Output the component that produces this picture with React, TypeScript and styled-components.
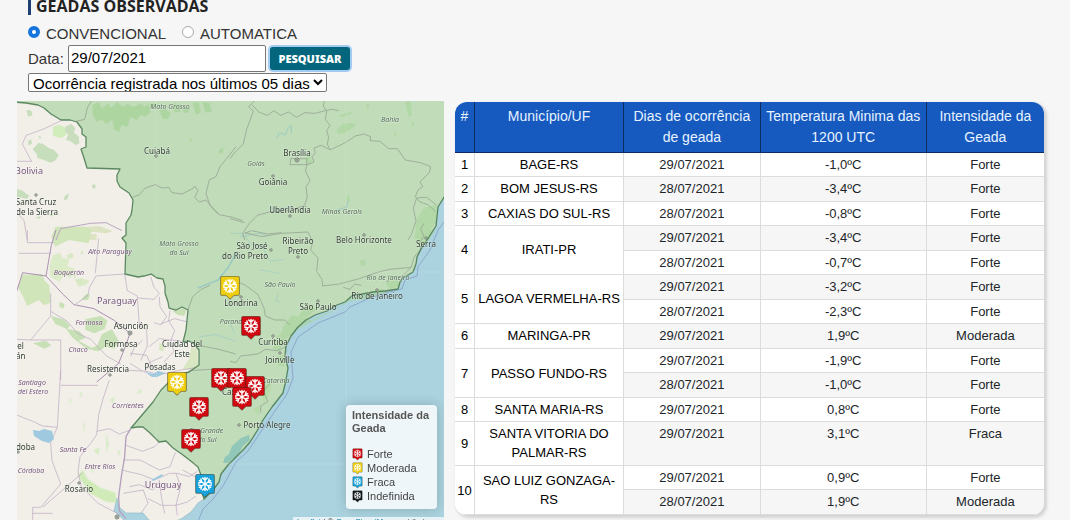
import React from "react";
import styled, { createGlobalStyle } from "styled-components";

const GlobalStyle = createGlobalStyle`
  *, *::before, *::after { box-sizing: border-box; }
  html { background: #f6f6f6; overflow: hidden; }
  body {
    margin: 0;
    color: #333;
    font-family: "Liberation Sans", Arial, sans-serif;
    font-size: 15px;
  }
`;

const Page = styled.main`
  padding: 0 26px 0 17px;
`;

const Filters = styled.form`
  padding: 0 0 9px 11px;
`;

const Heading = styled.h1`
  margin: 0 0 8px;
  padding-left: 5px;
  border-left: 3px solid #1c3f74;
  color: #222;
  font-family: "Open Sans", "Noto Sans", sans-serif;
  font-size: 16px;
  font-weight: 700;
  line-height: 13px;
  height: 15px;
  white-space: nowrap;
`;

const RadioRow = styled.div`
  display: flex;
  gap: 16px;
  height: 21px;
`;

const RadioLabel = styled.label`
  display: flex;
  align-items: center;
  gap: 6px;
`;

const Radio = styled.input`
  appearance: none;
  width: 12px;
  height: 12px;
  margin: 0 0 3px;
  border: 1px solid #aaa;
  border-radius: 50%;
  background: #fff;
  &:checked { border: 4px solid #1475dc; }
`;

const DateRow = styled.div`
  display: flex;
  align-items: center;
  height: 28px;
`;

const DateLabel = styled.label`
  width: 40px;
`;

const DateInput = styled.input`
  width: 198px;
  height: 27px;
  padding: 0 2px 2px;
  border: 1px solid #767676;
  border-radius: 2px;
  background: #fff;
  color: #000;
  font: inherit;
`;

const SearchButton = styled.button`
  margin-left: 4px;
  width: 80px;
  height: 23px;
  padding: 0;
  border: 0;
  border-radius: 3px;
  background: #03667c;
  box-shadow: 0 0 0 2px #a3cbf2;
  color: #fff;
  font-family: "Noto Sans", "Open Sans", sans-serif;
  font-size: 11px;
  font-weight: 900;
`;

const PeriodSelect = styled.select`
  display: block;
  width: 299px;
  height: 19px;
  margin-top: 1px;
  padding: 0;
  border: 1px solid #767676;
  border-radius: 2px;
  background: #fff;
  color: #000;
  font: inherit;
`;

const Content = styled.div`
  display: grid;
  grid-template-columns: minmax(0, 427fr) minmax(0, 589fr);
  gap: 11px;
  align-items: start;
`;

const MapPanel = styled.section`
  position: relative;
  height: 432px;
  overflow: hidden;
  background: #aad3df;
`;

const MapSvg = styled.svg`
  display: block;
  width: 100%;
  height: 100%;
  font-family: "Noto Sans", sans-serif;
`;

const PlaceText = styled.text<{ $kind: Kind }>`
  text-anchor: middle;
  paint-order: stroke;
  stroke: rgba(255, 255, 255, 0.4);
  stroke-width: 1px;
  font-size: ${(p) => (p.$kind === "country" ? 9 : p.$kind === "city" ? 8 : 7)}px;
  font-style: ${(p) => (p.$kind === "state" || p.$kind === "province" ? "italic" : "normal")};
  fill: ${(p) =>
    p.$kind === "city" ? "#2f3b30" : p.$kind === "state" ? "#566e59" : "#75557b"};
`;

const Legend = styled.aside`
  position: absolute;
  right: 7px;
  bottom: 24px;
  width: 91px;
  padding: 4px 4px 6px 6px;
  border-radius: 4px;
  background: rgba(255, 255, 255, 0.8);
  box-shadow: 0 0 12px rgba(0, 0, 0, 0.2);
  color: #555;
  font-size: 11px;
`;

const LegendTitle = styled.h2`
  margin: 0 0 12px;
  font-size: 11px;
  font-weight: 700;
  line-height: 13px;
`;

const LegendItem = styled.div`
  display: flex;
  align-items: center;
  gap: 4px;
  height: 14px;
  color: #444;
`;

const Attribution = styled.footer`
  position: absolute;
  right: 0;
  bottom: 0;
  width: 151px;
  height: 16px;
  padding-left: 4px;
  background: rgba(255, 255, 255, 0.7);
  color: #333;
  font-size: 8px;
  line-height: 9px;
  white-space: nowrap;
  a { color: #0078a8; text-decoration: none; }
`;

const TableFrame = styled.div`
  margin-top: 1px;
  overflow: hidden;
  border-radius: 12px;
  background: #fff;
  box-shadow: 2px 2px 3px 1px #d4d4d4;
`;

const DataTable = styled.table`
  width: 100%;
  table-layout: fixed;
  border-collapse: separate;
  border-spacing: 0;
  color: #212529;
  font-size: 13px;
  line-height: 19px;
  text-align: center;
`;

const Col = styled.col<{ $share: number }>`
  width: ${(p) => p.$share}%;
`;

const HeadCell = styled.th`
  padding: 4px 2px;
  border-right: 1px solid #0d2c60;
  border-bottom: 1px solid #0d2c60;
  background: #165abf;
  color: #e8f3ff;
  font-size: 14px;
  font-weight: 400;
  line-height: 21px;
  vertical-align: top;
  &:last-child { border-right: 0; }
`;

const Cell = styled.td`
  padding: 2px;
  border-right: 1px solid #dcdcdc;
  border-bottom: 1px solid #dcdcdc;
  vertical-align: top;
  &:last-child { border-right: 0; }
`;

const GroupCell = styled(Cell)`
  background: #fff;
  color: #000;
  vertical-align: middle;
`;

const Row = styled.tr`
  &:nth-child(even) { background: #f6f6f6; }
  &:nth-child(even) > td { padding-bottom: 3px; }
`;

type Kind = "city" | "state" | "province" | "country";

type Reading = [day: string, temperature: string, intensity: string];

const STATIONS: { name: string; readings: Reading[] }[] = [
  { name: "BAGE-RS", readings: [["29/07/2021", "-1,0ºC", "Forte"]] },
  { name: "BOM JESUS-RS", readings: [["28/07/2021", "-3,4ºC", "Forte"]] },
  { name: "CAXIAS DO SUL-RS", readings: [["28/07/2021", "-0,8ºC", "Forte"]] },
  { name: "IRATI-PR", readings: [["29/07/2021", "-3,4ºC", "Forte"], ["28/07/2021", "-0,7ºC", "Forte"]] },
  { name: "LAGOA VERMELHA-RS", readings: [["29/07/2021", "-3,2ºC", "Forte"], ["28/07/2021", "-2,3ºC", "Forte"]] },
  { name: "MARINGA-PR", readings: [["29/07/2021", "1,9ºC", "Moderada"]] },
  { name: "PASSO FUNDO-RS", readings: [["29/07/2021", "-1,9ºC", "Forte"], ["28/07/2021", "-1,0ºC", "Forte"]] },
  { name: "SANTA MARIA-RS", readings: [["29/07/2021", "0,8ºC", "Forte"]] },
  { name: "SANTA VITORIA DO PALMAR-RS", readings: [["29/07/2021", "3,1ºC", "Fraca"]] },
  { name: "SAO LUIZ GONZAGA-RS", readings: [["29/07/2021", "0,9ºC", "Forte"], ["28/07/2021", "1,9ºC", "Moderada"]] },
];

const LABELS: [text: string, x: number, y: number, kind: Kind][] = [
  ["Mato Grosso", 170, 109, "state"],
  ["Bahia", 390, 122, "state"],
  ["Goiás", 256, 166, "state"],
  ["Minas Gerais", 342, 214, "state"],
  ["Mato Grosso", 179, 246, "state"],
  ["do Sul", 179, 255, "state"],
  ["São Paulo", 280, 287, "state"],
  ["Rio de Janeiro", 388, 280, "state"],
  ["Paraná", 231, 324, "state"],
  ["Catarina", 276, 383, "state"],
  ["Rio Grande", 206, 433, "state"],
  ["do Sul", 207, 442, "state"],
  ["Alto Paraguay", 110, 254, "province"],
  ["Boquerón", 69, 275, "province"],
  ["Formosa", 89, 325, "province"],
  ["Chaco", 78, 352, "province"],
  ["Corrientes", 128, 408, "province"],
  ["Santiago", 32, 385, "province"],
  ["del Estero", 33, 394, "province"],
  ["Santa Fe", 73, 452, "province"],
  ["Entre Ríos", 100, 469, "province"],
  ["Córdoba", 31, 473, "province"],
  ["Bolivia", 29, 174, "country"],
  ["Paraguay", 117, 304, "country"],
  ["Uruguay", 163, 488, "country"],
  ["Cuiabá", 157, 154, "city"],
  ["Brasília", 297, 156, "city"],
  ["Goiânia", 273, 185, "city"],
  ["Uberlândia", 290, 213, "city"],
  ["São José", 252, 249, "city"],
  ["do Rio Preto", 245, 259, "city"],
  ["Ribeirão", 298, 244, "city"],
  ["Preto", 298, 254, "city"],
  ["Belo Horizonte", 364, 243, "city"],
  ["Serra", 426, 247, "city"],
  ["Rio de Janeiro", 377, 299, "city"],
  ["São Paulo", 318, 310, "city"],
  ["Londrina", 241, 306, "city"],
  ["Curitiba", 273, 345, "city"],
  ["Joinville", 280, 363, "city"],
  ["Caxias", 234, 395, "city"],
  ["Porto Alegre", 267, 428, "city"],
  ["Santa Cruz", 36, 205, "city"],
  ["de la Sierra", 37, 215, "city"],
  ["Asunción", 131, 329, "city"],
  ["Formosa", 121, 347, "city"],
  ["Ciudad del", 182, 347, "city"],
  ["Este", 182, 357, "city"],
  ["Posadas", 160, 370, "city"],
  ["Resistencia", 108, 372, "city"],
  ["Miguel", 11, 349, "city"],
  ["Tucumán", 8, 359, "city"],
  ["Córdoba", 19, 450, "city"],
  ["Rosario", 79, 492, "city"],
];

const CITY_DOTS = [
  [156, 156], [273, 176], [290, 216], [271, 250], [298, 257], [364, 235],
  [426, 238], [377, 290], [318, 301], [241, 297], [273, 336], [280, 353],
  [239, 425], [36, 195], [122, 350], [110, 375], [18, 452], [79, 483],
];

const CAPITAL_DOTS = [[297, 160], [130, 333], [117, 517]];

const COLORS = { forte: "#d10a12", moderada: "#efce10", fraca: "#17a2db", indefinida: "#10171c" };

const PINS: [x: number, y: number, color: string][] = [
  [230, 286, COLORS.moderada],
  [251, 326, COLORS.forte],
  [177, 382, COLORS.moderada],
  [221, 378, COLORS.forte],
  [237, 378, COLORS.forte],
  [255, 386, COLORS.forte],
  [242, 397, COLORS.forte],
  [199, 407, COLORS.forte],
  [191, 439, COLORS.forte],
  [205, 484, COLORS.fraca],
];

const LEGEND = [
  ["Forte", COLORS.forte],
  ["Moderada", COLORS.moderada],
  ["Fraca", COLORS.fraca],
  ["Indefinida", COLORS.indefinida],
];

const COAST =
  "L213 490 L219 482 L221 474 L228 465 L236 457 L244 449 L250 442 L257 431 L263 420 L272 407 L283 393 L286 380 L288 368 L285 356 L286 346 L291 336 L298 327 L306 320 L315 315 L327 311 L337 305 L345 302 L353 295 L362 294 L373 292 L385 291 L398 289 L400 282 L403 278 L413 272 L416 264 L417 257 L421 249 L427 240 L436 226 L438 207 L446 194";

const BRAZIL =
  "M14 102 L26 103 L38 105 L44 108 L51 114 L61 120 L70 120 L77 122 L82 129 L82 134 L86 137 L86 147 L81 149 L84 158 L87 168 L120 169 L117 175 L117 181 L120 187 L129 193 L133 200 L132 210 L131 215 L126 223 L126 235 L122 238 L126 243 L125 274 L138 277 L144 276 L151 274 L157 278 L163 279 L165 286 L165 293 L168 302 L169 308 L176 310 L182 307 L188 310 L187 320 L186 330 L183 342 L189 341 L194 344 L199 350 L199 365 L189 372 L178 375 L168 383 L161 390 L153 402 L142 415 L131 428 L137 427 L143 427 L150 433 L159 442 L166 441 L173 448 L183 455 L192 462 L198 467 L202 478 L200 485 L204 499 " +
  COAST;

const LAND =
  "M10 90 H446 V194 " +
  "L438 207 L436 226 L427 240 L417 257 L413 272 L403 278 L398 289 L373 292 L353 295 L337 305 L315 315 L298 327 L286 346 L288 368 L283 393 L272 407 L263 420 L250 442 L236 457 L221 474 L213 490 L204 499 L198 503 L191 512 L181 519 L160 527 L149 520 L143 513 L126 513 L119 507 L117 498 L114 511 L123 519 L130 540 H10 Z";

function Snowflake() {
  return (
    <g fill="none" stroke="#fff" strokeWidth="1.4" strokeLinecap="round">
      {[0, 60, 120, 180, 240, 300].map((angle) => (
        <path key={angle} d="M0 0V-6.6M-2.3 -6L0 -3.8L2.3 -6" transform={`rotate(${angle})`} />
      ))}
    </g>
  );
}

function Pin({ x, y, color }: { x: number; y: number; color: string }) {
  return (
    <g transform={`translate(${x} ${y})`}>
      <path d="M-8 -10H8Q10 -10 10 -8V8Q10 10 8 10H4L0 14L-4 10H-8Q-10 10-10 8V-8Q-10-10-8-10Z" fill="#453414" opacity=".4" />
      <path d="M-8 -9.5H8Q9.3 -9.5 9.3 -8V8Q9.3 9.2 8 9.2H4L0 13L-4 9.2H-8Q-9.3 9.2-9.3 8V-8Q-9.3-9.5-8-9.5Z" fill={color} stroke="#000" strokeOpacity=".2" />
      <Snowflake />
    </g>
  );
}

function BrazilMap() {
  return (
    <MapSvg viewBox="17 101 427 432" preserveAspectRatio="xMidYMid slice" role="img" aria-label="Mapa de geadas">
      <path d={LAND} fill="#f2efe9" stroke="#8fb4c4" strokeWidth=".6" />

      {/* vegetation outside Brazil */}
      <g fill="#b9dba3" opacity=".75">
        <g transform="translate(16 100) scale(.3333)">
          <path d="M110 82l18-8 20 8 2 24-14 8-24-6z" fill="#c5ecab" />
          <path d="M150 78l16-6 12 12-4 14 14 10 2 22-10 6-16-12-14-4 6-16-10-10z" fill="#bcd9b0" />
          <path d="M32 30l14 2 4 14-14 4zM36 122l10-4 2 14-10 4zM50 148l18-20 14 4 12 10 20 8 14 14-8 16-16 8-20-8-20-6-2-12zM66 108l10 2-4 8zM230 252l10 4-4 12-8-6zM0 266l20 6 20 16-6 8-34-6zM146 288l14-8-6 18-10 2zM98 344l16-6-6 12zM60 352l16-4-8 10z" fill="#b9d9ae" />
          <path d="M142 402h100v18h-104zM140 386l110-8 40 16-20 6-60-6z" fill="#d4dfb6" />
        </g>
        <g transform="translate(16 230) scale(.3333)">
          <path d="M6 172l14-38 58-2 8 20 14 14 4 52-20 8-16-16-34 18-10-22zM106 20l12-30 90 0 20 10-10 40-60-10-40 20z" fill="#c6e2ab" />
          <path d="M100 110l10-34 22-8 8 16 20 4-6 20 24 10-14 26-20-8-14 20-26-16zM150 76l18-6 6 12-16 6zM176 148l20-4 24 8-10 14-24 4z" fill="#d3e9bb" />
          <path d="M130 216l16 6-4 14-12-6zM104 258l38 10 20 18-8 12-36-16zM150 296l40 8 18 20-20 8 40 22 16-8 14-34 30-14 20 34-12 24-28-6-20 14-36-8-44-34zM208 268l46-10 20 14-8 24-30 14-28-10zM50 340l40-8 16 14-20 10zM196 210l20 0 6-16-12-2zM470 244l30-10 12 8-8 16-20-4z" />
          <path d="M170 130l12 6-8 10zM184 150l16 4-6 12zM160 68l12 4-4 12zM196 60l8 8-10 8zM430 340l14 4-2 20-12-4zM526 350l18 6 2 54-16 10-30-4 20-30z" fill="#cfe3b4" />
        </g>
        <g transform="translate(16 370) scale(.3333)">
          <path d="M186 316l14-16 14 26 40 28 44 14 4 30-30-2-50-26z" fill="#c4eaa6" />
          <path d="M200 150l8 20-4 20zM160 80l6 10-4 14zM280 90l16-10-4 20zM360 70l14-14 4 12zM270 190l10 30-10 30zM232 240l20-8-6 24zM228 280l6 20-8 10zM190 66l10 4-6 14zM304 240l10 6-6 14z" fill="#cfebbd" />
        </g>
      </g>

      {/* provincial borders of the neighbouring countries */}
      <g fill="none" stroke="#b9a6bf" strokeWidth="2">
        <g transform="translate(16 100) scale(.3333)">
          <path d="M135 62l-50 24-54 20-12 26 14 26 14 26H0M0 334l24 28 10 58" />
          <path d="M120 420l14-34 90-16 46-2 48 24" strokeWidth="3" />
        </g>
        <g transform="translate(16 230) scale(.3333)">
          <path d="M120 0l-14 46-16 92-70-10L0 190M90 138l50 54 34 32 60 12 62 36 46 38" strokeWidth="3" stroke="#aa91b2" />
          <path d="M342 310l-14 40-20 50-30 26-36 30" strokeWidth="3" stroke="#aa91b2" />
          <path d="M8 70h98M34 0v38h80M104 190v68l-60 72-44-2M44 330h90v120M104 244l50 30 30 36 40 18 48 50 42 24M238 130l10-104M180 222l36-26 4-22 20-36 86-6 8 50 30 16 6 90 22 10 2 50-20 44M364 204l50 4 16-18-16-18-10-32M430 200l2 30 20 30-18 24-20-6M434 282l42-16 38 10M400 350l30-24 66 8M342 370l50 6 18 40M342 400l38 24M330 420l60 4 40 10 66-14 60-10M462 242l-4 30 18 30-12 32 10 30-30 32M380 330l-26 24-10 26M440 380l-40 18-14 30" />
        </g>
        <g transform="translate(16 370) scale(.3333)">
          <path d="M0 134l50 20 30 14 44 4 10-170M134 46h112M124 172l-20 46 4 54 26 70-60 70H50v38M50 430h60M280 30l-20 60-12 44-6 60-18 26-32 40-6 46 10 44 50 50 70 36M242 184l38-8 30 16 34-12M80 412l120-104" />
          <path d="M344 176l-14 24-4 60-10 60-8 60 2 42 20 24" strokeWidth="4" stroke="#b3a0bd" />
          <path d="M330 226l50 18 36-14 18-18M322 270l50 0 58 30 32-10 16-42M316 300l60 14 40 16 44-20 24 0 36 10 24-16M340 350l30-6 40 16 20-24M322 370l60-10 14 40-20 28M396 386l40 20 44 0 34-10 26-18M430 330l6 50 10 50M480 310l14 40-14 56 4 30M500 300l36 20" />
        </g>
      </g>

      <path d={`${BRAZIL} V90 H14 Z`} fill="#c1dcb9" />

      {/* vegetation inside Brazil */}
      <g fill="#a0d090" opacity=".6">
        <g transform="translate(16 100) scale(.3333)">
          <path d="M230 14l18-8 10 20 18-16 8 14 20-18 16 16 14-10 20 8 24-10 6 12 12-10 8 24-16 14-14-6-12 16-18-10-10 30-18-6-8 22-14-8-4-30-18 14-16-14-14 8-12-22zM400 10h20l-4 12-14 2zM430 30l20-2 14 12-8 18-16-2zM470 10l20 4 4 20-18 4zM500 20l20 4-2 14-16 0zM530 10l18-4 6 30-14 8zM560 6l20 4 8 24-20 4zM610 150l12-8-2 16-12 4zM520 116l10 2-6 10z" />
        </g>
        <g transform="translate(230 100) scale(.3333)">
          <path d="M318 92l20-20 30-4 10 8-30 22-22 4zM328 46l34-10 6 4-34 12zM526 6l16-2 4 40-10 8zM408 14l10-4-4 20zM544 62l10 6-6 14zM228 170l12-4 6 20-14 10zM350 290l8-8 2 20-8 2zM490 100l10-2-2 14zM584 322l38-6-4 50-34 50-30 0 6-60z" fill="#a9d69b" />
        </g>
        <g transform="translate(230 230) scale(.3333)">
          <path d="M160 290l26-34 20 4 14-26 30-8 8 14-30 24 16 6 48-22 40-20 28-24 16-10 20-2 60-16 20 10-60 20-60 8-36 24-60 30-60 32-34 28-16-6zM466 160l36-16 8 26-30 6zM390 92l14-2 4 14-14 4zM560 20l36-20h20l-26 40-20 10zM140 320l26-16 4 14-24 50-16-12zM140 380l18-4 6 34-20-4z" fill="#a8d49a" />
        </g>
        <g transform="translate(230 370) scale(.3333)">
          <path d="M100 50l16-14 8 10-12 40-14 10zM70 118l20-10-6 26z" fill="#addb9d" />
        </g>
      </g>

      {/* rivers and lagoons */}
      <g fill="none" stroke="#8fc4c4" strokeWidth="2" opacity=".75">
        <g transform="translate(230 100) scale(.3333)">
          <path d="M140 116l8-18 18 6 8-20 10-8v24M186 320l-46 10-20-8M320 330l30-8 4-20M30 410l60-10 20 8" strokeWidth="3" />
        </g>
        <g transform="translate(16 230) scale(.3333)">
          <path d="M660 70l-22 40-32 40-60 24" strokeWidth="5" />
          <path d="M550 320l50-6 60 20" />
        </g>
        <g transform="translate(230 230) scale(.3333)">
          <path d="M0 10l40 0 20 30 40 14 20 40 40-6M144 190l-6 20 14 8M0 280l14 30M90 120l60 10" />
        </g>
      </g>
      <g fill="#91c7b9">
        <path d="M223 463l2-6 4-3 3-8 9-8 8-3 1 5-7 6-5 9-10 8z" />
        <path d="M33 430l6 1 5-2 8 2 2 8-5 4-7-2-8-5z" fill="#9ec9df" />
        <path d="M145 372l8 2 5-3 8 2-9 4-5 0z" fill="#9ec9df" />
        <path d="M151 480l11-6 1 2-10 5z" fill="#9ec9df" />
        <path d="M203 487l4-9 3 1-3 10z" />
      </g>

      {/* state borders */}
      <g fill="none" stroke="#95a592" strokeWidth="2.4" strokeLinejoin="round">
        <g transform="translate(16 100) scale(.3333)">
          <path d="M228 0l-14 24-8 34-26 6M350 292l20-8 18-20 30-10 20 10 20-2 10 16 30 4 32-16 6-8 10 14-10 20 14 14 20-6 20 24 20 20 40 8 30 10" />
          <path d="M660 140l-28 36-20 24-12 30-20 10-10 40 12 36 24 26" />
        </g>
        <g transform="translate(230 100) scale(.3333)">
          <path d="M76 0l-20 20 14 14-20 54-10 44-24 24-16 20M66 14l20 22 26 10 20-14 20 14 24-10 24 16 24-14 30 2 50-12 22 4" />
          <path d="M284 0l-4 18 10 16-4 24 14 18-10 16 6 20-4 20 8 18 46-22 30-20 26-6 20 8-2 12 30 2 26 22 26 0 24 34 46 8 30 12-4 18-28 28 8 14-14 10-8 20 14 16 24 8 22 20M298 148l-24-12-22 8 4 14-10 12 6 16-20 8M182 176h48v18h-50zM232 192l-6 20 14 30-12 18 4 30-8 26-46 16-60 4-36 10-24 24-20 30 6 20M0 356l44 12M44 400l20-8 50 10 40-4M620 316l-30-24-30 2-10 30 8 40-14 40-10 16" />
        </g>
        <g transform="translate(230 230) scale(.3333)">
          <path d="M44 8l50 12 60-10 80-4 14 30-6 24 22 24-4 40 16 24 2 20 50-6 60-16 50-18 40-10 66-6 8-30 20-24-4-20 14-20-10-20 10-18M0 150l44 14 40 30 18 40 4 24 28 12 30 0 16 16M170 350l-30 12-34-4-22 14-52 6-14 20-18-4M340 172l20 6 14-16 20 4M516 140l26-26" />
        </g>
        <g transform="translate(16 230) scale(.3333)">
          <path d="M516 240l14-40 26-22 26-12M548 346l60 12 52 14" />
        </g>
        <g transform="translate(16 370) scale(.3333)">
          <path d="M520 2l64-4 76 4" />
        </g>
        <g transform="translate(230 370) scale(.3333)">
          <path d="M120 40l-20 24 14 30-22 14 0 20" />
        </g>
      </g>

      {/* maritime limit */}
      <path
        d="M444 222 L438 230 L430 250 L418 267 L417 276 L405 280 L402 289 L389 292 L370 298 L350 307 L345 312 L318 323 L298 337 L291 352 L293 378 L287 394 L275 411 L260 433 L248 451 L236 462 L223 486 L213 499 L203 509 L193 534"
        fill="none"
        stroke="#879cc5"
        strokeWidth=".8"
      />
      <path d={BRAZIL} fill="none" stroke="#45784e" strokeWidth="1.3" strokeLinejoin="round" opacity=".85" />
      <path d="M156 101V533M346 101V533M17 464H444M17 272H444" stroke="#fff" strokeWidth=".5" opacity=".25" />

      <g fill="#e9eee4" stroke="#4c554c" strokeWidth=".7">
        {CITY_DOTS.map(([x, y]) => (
          <circle key={`${x}-${y}`} cx={x} cy={y} r="1.2" />
        ))}
        {CAPITAL_DOTS.map(([x, y]) => (
          <g key={`${x}-${y}`}>
            <circle cx={x} cy={y} r="2" />
            <circle cx={x} cy={y} r=".6" />
          </g>
        ))}
      </g>

      {LABELS.map(([text, x, y, kind]) => (
        <PlaceText key={`${text}-${x}-${y}`} x={x} y={y} $kind={kind}>
          {text}
        </PlaceText>
      ))}
      {PINS.map(([x, y, color]) => (
        <Pin key={`${x}-${y}`} x={x} y={y} color={color} />
      ))}
    </MapSvg>
  );
}

export default function App() {
  return (
    <>
      <GlobalStyle />
      <Page>
        <Filters onSubmit={(e) => e.preventDefault()}>
          <Heading>GEADAS OBSERVADAS</Heading>
          <RadioRow>
            <RadioLabel>
              <Radio type="radio" name="station" defaultChecked />
              CONVENCIONAL
            </RadioLabel>
            <RadioLabel>
              <Radio type="radio" name="station" />
              AUTOMATICA
            </RadioLabel>
          </RadioRow>
          <DateRow>
            <DateLabel htmlFor="date">Data:</DateLabel>
            <DateInput id="date" type="text" defaultValue="29/07/2021" />
            <SearchButton type="submit">PESQUISAR</SearchButton>
          </DateRow>
          <PeriodSelect aria-label="Período">
            <option>Ocorrência registrada nos últimos 05 dias</option>
          </PeriodSelect>
        </Filters>

        <Content>
          <MapPanel>
            <BrazilMap />
            <Legend>
              <LegendTitle>Intensidade da Geada</LegendTitle>
              {LEGEND.map(([name, color]) => (
                <LegendItem key={name}>
                  <svg width="11" height="13" viewBox="-11 -11 22 26" aria-hidden="true">
                    <Pin x={0} y={0} color={color} />
                  </svg>
                  {name}
                </LegendItem>
              ))}
            </Legend>
            <Attribution>
              <a href="#leaflet">Leaflet</a> | © <a href="#osm">OpenStreetMap</a> contributors
            </Attribution>
          </MapPanel>

          <TableFrame>
            <DataTable>
              <colgroup>
                <Col $share={3.4} />
                <Col $share={25.3} />
                <Col $share={23.2} />
                <Col $share={28.2} />
                <Col $share={19.9} />
              </colgroup>
              <thead>
                <tr>
                  <HeadCell scope="col">#</HeadCell>
                  <HeadCell scope="col">Município/UF</HeadCell>
                  <HeadCell scope="col">Dias de ocorrência de geada</HeadCell>
                  <HeadCell scope="col">Temperatura Minima das 1200 UTC</HeadCell>
                  <HeadCell scope="col">Intensidade da Geada</HeadCell>
                </tr>
              </thead>
              <tbody>
                {STATIONS.map((station, index) =>
                  station.readings.map(([day, temperature, intensity], i) => (
                    <Row key={station.name + day}>
                      {i === 0 && (
                        <>
                          <GroupCell rowSpan={station.readings.length}>{index + 1}</GroupCell>
                          <GroupCell rowSpan={station.readings.length}>{station.name}</GroupCell>
                        </>
                      )}
                      <Cell>{day}</Cell>
                      <Cell>{temperature}</Cell>
                      <Cell>{intensity}</Cell>
                    </Row>
                  )),
                )}
              </tbody>
            </DataTable>
          </TableFrame>
        </Content>
      </Page>
    </>
  );
}
